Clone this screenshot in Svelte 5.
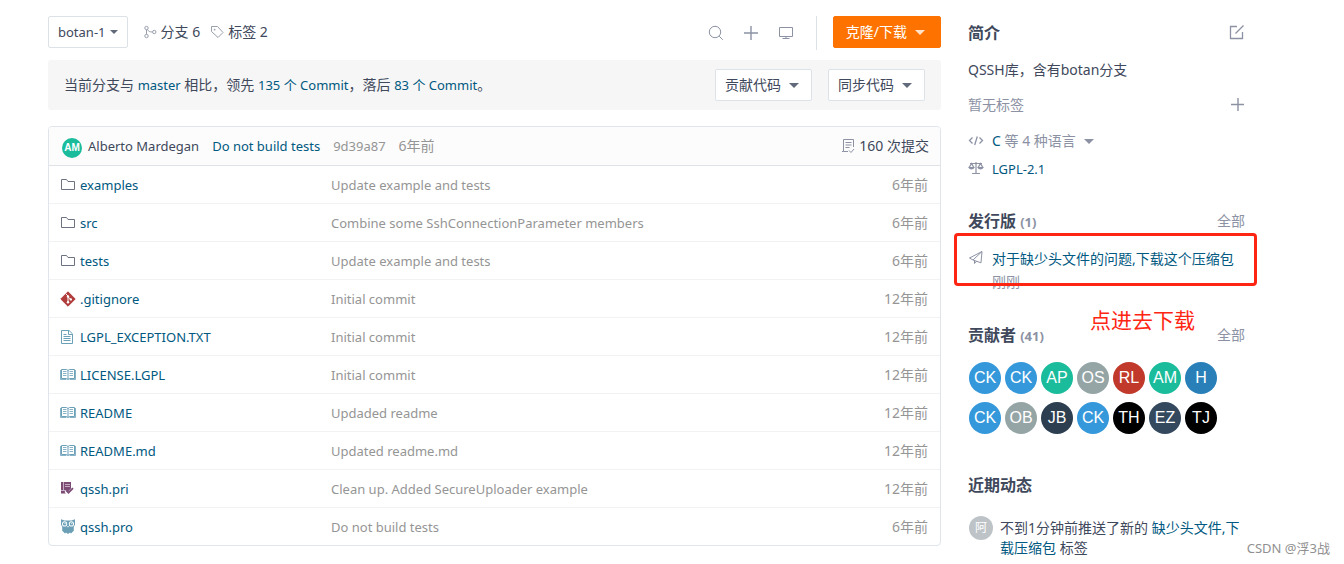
<script lang="ts">
  type Kind = 'folder' | 'git' | 'text' | 'book' | 'pri' | 'owl';

  const files: { name: string; kind: Kind; message: string; age: string }[] = [
    { name: 'examples', kind: 'folder', message: 'Update example and tests', age: '6年前' },
    { name: 'src', kind: 'folder', message: 'Combine some SshConnectionParameter members', age: '6年前' },
    { name: 'tests', kind: 'folder', message: 'Update example and tests', age: '6年前' },
    { name: '.gitignore', kind: 'git', message: 'Initial commit', age: '12年前' },
    { name: 'LGPL_EXCEPTION.TXT', kind: 'text', message: 'Initial commit', age: '12年前' },
    { name: 'LICENSE.LGPL', kind: 'book', message: 'Initial commit', age: '12年前' },
    { name: 'README', kind: 'book', message: 'Updaded readme', age: '12年前' },
    { name: 'README.md', kind: 'book', message: 'Updated readme.md', age: '12年前' },
    { name: 'qssh.pri', kind: 'pri', message: 'Clean up. Added SecureUploader example', age: '12年前' },
    { name: 'qssh.pro', kind: 'owl', message: 'Do not build tests', age: '6年前' },
  ];

  const contributors = [
    { initials: 'CK', color: '#3498db' },
    { initials: 'CK', color: '#3498db' },
    { initials: 'AP', color: '#1abc9c' },
    { initials: 'OS', color: '#95a5a6' },
    { initials: 'RL', color: '#c0392b' },
    { initials: 'AM', color: '#1abc9c' },
    { initials: 'H', color: '#2980b9' },
    { initials: 'CK', color: '#3498db' },
    { initials: 'OB', color: '#95a5a6' },
    { initials: 'JB', color: '#2c3e50' },
    { initials: 'CK', color: '#3498db' },
    { initials: 'TH', color: '#000000' },
    { initials: 'EZ', color: '#34495e' },
    { initials: 'TJ', color: '#000000' },
  ];
</script>

{#snippet fileIcon(kind: Kind)}
  <svg class="icon" viewBox="0 0 16 16" width="16" height="16" aria-hidden="true">
    {#if kind === 'folder'}
      <path d="M1.5 12.5v-10h5l1.500 2h6.500v8z" fill="none" stroke="#6c7280" />
    {:else if kind === 'git'}
      <path d="M8 .8 15.200 8 8 15.200.8 8z" fill="#b03c3c" stroke="#b03c3c" stroke-linejoin="round" />
      <path d="M5.700 2.700 8 5v6M8 5.800l2.800 2.700" fill="none" stroke="#fff" />
      <circle cx="8" cy="5.400" r="1.200" fill="#fff" />
      <circle cx="8" cy="11.300" r="1.200" fill="#fff" />
      <circle cx="10.800" cy="8.400" r="1.200" fill="#fff" />
    {:else if kind === 'text'}
      <path d="M1.500 1.500h7.600l3.400 3.400v9.600h-11zM8.500 1.500v4h4" fill="none" stroke="#6aa0b8" />
      <path d="M3.500 5.500h3M3.500 7.500h7M3.500 9.500h7M3.500 11.500h7" fill="none" stroke="#6aa0b8" />
    {:else if kind === 'book'}
      <path d="M1.500 2.500h5L8 3.500l1.500-1h5v9h-5L8 12.500l-1.500-1h-5zM8 3.500v9" fill="none" stroke="#6aa0b8" />
      <path d="M.5 3v9.500h6M15.500 3v9.500h-6M3 4.500h3.500M3 6.500h3.500M3 8.500h3.500M9.500 4.500H13M9.500 6.500H13M9.500 8.500H13" fill="none" stroke="#6aa0b8" stroke-width=".8" />
    {:else if kind === 'pri'}
      <path d="M1 1h10v6.500L7.500 11 6 9.500 4.500 11 6 12.500H1z" fill="#7b4b75" />
      <path d="M3.500 1v8.500M1 9.500h5M5 3.500h5M5 5.500h5" fill="none" stroke="#d9c6d6" stroke-width=".8" />
      <path d="m6.500 9.700 2 2L13 7.200" fill="none" stroke="#7b4b75" stroke-width="1.800" />
    {:else}
      <path d="M1 .3 4.500 1.500h7L15 .3v5.400l-1.200 2v4L11 14.500l-1-1L8 15l-2-1.500-1 1-2.800-2.800v-4L1 5.700z" fill="#6a9fb5" />
      <circle cx="4.600" cy="4.900" r="2.600" fill="#fff" />
      <circle cx="11.400" cy="4.900" r="2.600" fill="#fff" />
      <circle cx="4.600" cy="4.900" r="1.700" fill="#6a9fb5" />
      <circle cx="11.400" cy="4.900" r="1.700" fill="#6a9fb5" />
      <circle cx="5" cy="4.600" r=".6" fill="#fff" />
      <circle cx="11.800" cy="4.600" r=".6" fill="#fff" />
      <path d="m7.200 7 .8 1.800L8.800 7z" fill="#fff" />
    {/if}
  </svg>
{/snippet}

<div class="page">
  <main>
    <div class="toolbar">
      <button class="button branch" type="button">botan-1<span class="caret"></span></button>
      <a class="stat" href="#branches">
        <svg viewBox="0 0 14 14" width="14" height="14" aria-hidden="true">
          <g fill="none" stroke="#9a9fad">
            <circle cx="3.500" cy="3" r="1.700" />
            <circle cx="3.500" cy="11" r="1.700" />
            <circle cx="11.300" cy="7" r="1.700" />
            <path d="M3.500 4.700v4.600M4.500 4.500C5.300 6.500 7 7 9.600 7" />
          </g>
        </svg>
        分支 6
      </a>
      <a class="stat" href="#tags">
        <svg viewBox="0 0 14 14" width="14" height="14" aria-hidden="true">
          <path d="M1.500 1.500h6l5.500 6L8 12.500l-6.500-6z" fill="none" stroke="#9a9fad" stroke-linejoin="round" />
          <circle cx="4.600" cy="4.600" r=".9" fill="#9a9fad" />
        </svg>
        标签 2
      </a>
      <div class="tools">
        <button class="tool" type="button" aria-label="搜索">
          <svg viewBox="0 0 16 16" width="16" height="16"><circle cx="7" cy="7" r="5.700" /><path d="m11.200 11.200 3.600 3.600" /></svg>
        </button>
        <button class="tool" type="button" aria-label="新建">
          <svg viewBox="0 0 16 16" width="16" height="16"><path d="M8 1v14M1 8h14" stroke-width="1.400" /></svg>
        </button>
        <button class="tool" type="button" aria-label="Web IDE">
          <svg viewBox="0 0 16 16" width="16" height="16"><path d="M1.500 2.500h13v9h-13zM8 11.500v2M4.500 13.500h7" /></svg>
        </button>
      </div>
      <button class="button primary" type="button">克隆/下载<span class="caret"></span></button>
    </div>

    <div class="compare">
      <p>
        当前分支与 <a href="#master">master</a> 相比，领先 <a href="#ahead">135 个 Commit</a>，落后
        <a href="#behind">83 个 Commit</a>。
      </p>
      <button class="button" type="button">贡献代码<span class="caret"></span></button>
      <button class="button" type="button">同步代码<span class="caret"></span></button>
    </div>

    <div class="tree">
      <div class="commit">
        <span class="face">AM</span>
        <a class="author" href="#author">Alberto Mardegan</a>
        <a href="#commit">Do not build tests</a>
        <span class="muted">9d39a87</span>
        <span class="muted when">6年前</span>
        <a class="total" href="#commits">
          <svg viewBox="0 0 14 16" width="14" height="16" aria-hidden="true">
            <path d="M12.500 9V1.500h-10v12H7M1 13.500h1.500M4.500 4.500h6M4.500 7h6M4.500 9.500h4M8 12.500l2 2 3-3.500" fill="none" stroke="#8c92a4" />
          </svg>
          160 次提交
        </a>
      </div>
      <table>
        <tbody>
          {#each files as file}
            <tr>
              <td class="name"><a href="#{file.name}">{@render fileIcon(file.kind)}{file.name}</a></td>
              <td class="message">{file.message}</td>
              <td class="age">{file.age}</td>
            </tr>
          {/each}
        </tbody>
      </table>
    </div>
  </main>

  <aside>
    <section>
      <header>
        <h2>简介</h2>
        <button class="tool" type="button" aria-label="编辑">
          <svg viewBox="0 0 16 16" width="16" height="16"><path d="M8 1.500H1.500v12h12V7M6.500 8.500l8-8" stroke-width="1.300" /></svg>
        </button>
      </header>
      <p class="about">QSSH库，含有botan分支</p>
      <div class="labels">
        <span>暂无标签</span>
        <button class="tool" type="button" aria-label="添加标签">
          <svg viewBox="0 0 16 16" width="16" height="16"><path d="M9 1v13M2 7.500h13" stroke-width="1.400" /></svg>
        </button>
      </div>
      <div class="meta">
        <svg viewBox="0 0 16 16" width="16" height="16" aria-hidden="true"><path d="M4.500 4.500 1.500 7.500l3 3M11.500 4.500l3 3-3 3M9.300 3.500l-2.600 8.500" stroke-width="1.300" /></svg>
        <span><a href="#c">C</a> 等 4 种语言<span class="caret"></span></span>
      </div>
      <div class="meta">
        <svg viewBox="0 0 16 16" width="16" height="16" aria-hidden="true">
          <path d="M8 1v11.500M4 12.500h8M2 2.500h12M3.500 2.500l-2.300 4h4.600zM12.500 2.500l-2.300 4h4.600z" stroke-width="1.200" />
          <path d="M.5 6.500h6c-.8 2.600-5.200 2.600-6 0zM9.500 6.500h6c-.8 2.600-5.200 2.600-6 0z" fill="#8c92a4" stroke="none" />
        </svg>
        <a class="license" href="#license">LGPL-2.1</a>
      </div>
    </section>

    <section class="releases">
      <header>
        <h2>发行版 <small>(1)</small></h2>
        <a class="all" href="#releases">全部</a>
      </header>
      <div class="release">
        <svg viewBox="0 0 16 16" width="16" height="16" aria-hidden="true"><path d="M14 2.500 1.500 9l3.500 2 8 2.800zM14 2.500 5 11M6.500 11.500v3l2-2.300" /></svg>
        <div>
          <a href="#release">对于缺少头文件的问题,下载这个压缩包</a>
          <time>刚刚</time>
        </div>
        <div class="highlight"></div>
      </div>
    </section>

    <section class="contributors">
      <header>
        <h2>贡献者 <small>(41)</small></h2>
        <a class="all" href="#contributors">全部</a>
        <span class="note">点进去下载</span>
      </header>
      <div class="people">
        {#each contributors as person}
          <a class="person" href="#contributors" style:background-color={person.color}>{person.initials}</a>
        {/each}
      </div>
    </section>

    <section class="activity">
      <header><h2>近期动态</h2></header>
      <div class="event">
        <span class="actor">阿</span>
        <p>不到1分钟前推送了新的 <a href="#tag">缺少头文件,下载压缩包</a> 标签</p>
      </div>
    </section>
  </aside>

  <span class="watermark">CSDN @浮3战</span>
</div>

<style>
  :global(body) {
    background: #fff;
    color: #40485b;
    font: 14px/20px 'Noto Sans', 'Noto Sans CJK SC', sans-serif;
  }
  .page {
    position: relative;
    display: grid;
    grid-template-columns: minmax(0, 1fr) 277px;
    gap: 27px;
    padding: 16px 99px 6px 48px;
  }
  a {
    color: #005980;
    text-decoration: none;
  }
  p,
  h2 {
    margin: 0;
  }
  button {
    box-sizing: border-box;
    font: inherit;
    color: inherit;
    cursor: pointer;
  }

  .button {
    display: flex;
    align-items: center;
    gap: 8px;
    height: 32px;
    padding: 0 12px 0 9px;
    border: 1px solid #dce3e8;
    border-radius: 2px;
    background: #fff;
    white-space: nowrap;
  }
  .caret {
    display: inline-block;
    border: 5px solid transparent;
    border-top-color: #606a7b;
    border-bottom: 0;
  }
  .tool {
    display: flex;
    padding: 0;
    border: 0;
    background: none;
  }
  .tool svg,
  .meta svg,
  .release svg {
    flex: none;
    fill: none;
    stroke: #8c92a4;
  }

  .toolbar {
    display: flex;
    align-items: center;
  }
  .branch {
    gap: 4px;
    padding: 0 9px;
    font-size: 13px;
  }
  .branch .caret {
    border-width: 4px 4px 0;
  }
  .stat {
    display: flex;
    align-items: center;
    gap: 4px;
    margin-left: 10px;
    color: #40485b;
  }
  .branch + .stat {
    margin-left: 15px;
  }
  .tools {
    display: flex;
    align-items: center;
    gap: 19px;
    height: 34px;
    margin: 0 16px -2px auto;
    padding-right: 22px;
    border-right: 1px solid #dce3e8;
  }
  .primary {
    padding: 0 15px 0 12px;
    border-color: #fe7300;
    background: #fe7300;
    color: #fff;
  }
  .primary .caret {
    border-top-color: #ffe3cc;
  }

  .compare {
    display: flex;
    align-items: center;
    gap: 16px;
    height: 50px;
    margin-top: 12px;
    padding: 0 16px;
    border-radius: 3px;
    background: #f6f6f6;
  }
  .compare p {
    flex: 1;
  }
  .compare a {
    font-size: 13px;
  }

  .tree {
    margin-top: 16px;
    border: 1px solid #dfe5ea;
    border-radius: 4px;
    overflow: hidden;
    font-size: 13px;
  }
  .commit {
    display: flex;
    align-items: center;
    gap: 13px;
    height: 38px;
    padding: 0 11px 0 13px;
    border-bottom: 1px solid #dfe3e8;
    background: #fcfcfc;
  }
  .face {
    width: 20px;
    margin: 4px -7px 0 0;
    border-radius: 50%;
    background: #1abc9c;
    color: #fff;
    font: bold 10px/20px 'Liberation Sans', sans-serif;
    text-align: center;
  }
  .author,
  .total {
    color: #40485b;
  }
  .muted {
    color: #959595;
  }
  .when,
  .total,
  .age {
    font-size: 14px;
  }
  .total {
    display: flex;
    align-items: center;
    gap: 4px;
    margin-left: auto;
  }
  table {
    width: 100%;
    border-collapse: collapse;
    table-layout: fixed;
  }
  td {
    height: 37px;
    padding: 0;
    border-bottom: 1px solid #f0f2f4;
    color: #959595;
  }
  tr:last-child td {
    border-bottom: 0;
  }
  .name {
    width: 271px;
    padding-left: 11px;
  }
  .name a {
    display: flex;
    align-items: center;
    gap: 4px;
  }
  .age {
    width: 80px;
    padding-right: 12px;
    text-align: right;
  }

  aside {
    padding-top: 5px;
  }
  aside header {
    position: relative;
    display: flex;
    align-items: center;
    justify-content: space-between;
    height: 24px;
  }
  h2 {
    font-size: 16px;
    line-height: 24px;
  }
  small {
    color: #8c92a4;
    font-size: 13px;
  }
  .about {
    margin-top: 15px;
  }
  .labels {
    display: flex;
    align-items: center;
    justify-content: space-between;
    margin: 15px 0 16px;
    color: #8c92a4;
  }
  .all {
    color: #8c92a4;
  }
  .meta {
    display: flex;
    align-items: center;
    gap: 8px;
    height: 20px;
    margin-top: 8px;
    color: #8c92a4;
  }
  .meta .caret {
    margin: 0 0 2px 8px;
    border-top-color: #8c92a4;
  }
  .license {
    font-size: 13px;
  }
  .releases {
    margin-top: 30px;
  }
  .release {
    position: relative;
    display: flex;
    gap: 8px;
    margin-top: 16px;
  }
  .release time {
    display: block;
    margin-top: 3px;
    color: #8c92a4;
  }
  .highlight {
    position: absolute;
    inset: -16px -12px 6px -14px;
    border: 3px solid #ff2513;
    border-radius: 4px;
  }
  .contributors {
    margin-top: 31px;
  }
  .note {
    position: absolute;
    top: -15px;
    left: 122px;
    color: #ff2513;
    font-size: 21px;
    line-height: 24px;
  }
  .people {
    display: flex;
    flex-wrap: wrap;
    gap: 8px 4px;
    margin: 15px 20px 0 1px;
  }
  .person {
    width: 32px;
    border-radius: 50%;
    color: #fff;
    font: 16px/32px 'Liberation Sans', sans-serif;
    text-align: center;
  }
  .activity {
    margin-top: 39px;
  }
  .event {
    display: flex;
    gap: 7px;
    margin-top: 19px;
  }
  .actor {
    flex: none;
    width: 24px;
    height: 24px;
    margin-left: 1px;
    border-radius: 50%;
    background: #bdc3c7;
    color: #fff;
    font-size: 12px;
    line-height: 24px;
    text-align: center;
  }
  .event p {
    padding-top: 2px;
  }
  .watermark {
    position: absolute;
    right: 14px;
    bottom: 6px;
    color: #909090;
    font-size: 13px;
  }
</style>
